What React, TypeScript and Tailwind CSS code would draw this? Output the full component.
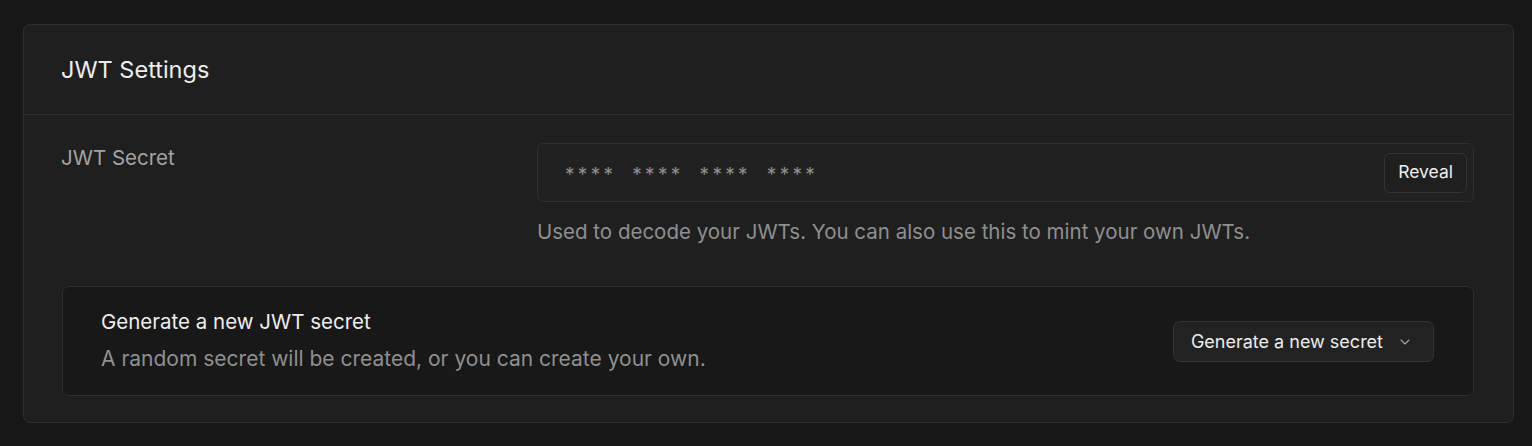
import { ChevronDown } from "lucide-react";

export default function App() {
  return (
    <div
      className="min-h-[446px] bg-[#171717] pl-[23px] pr-[18px] pt-[24px] pb-[22px]"
      style={{ fontFamily: "Inter, 'Noto Sans', sans-serif" }}
    >
      <div className="rounded-[7px] border border-[#2e2e2e] bg-[#1f1f1f]">
        <div className="flex h-[90px] items-center border-b border-[#2e2e2e] px-[37px]">
          <h2 className="text-[23.5px] font-normal text-[#ededed]">JWT Settings</h2>
        </div>

        <div className="pl-[37px] pr-[39px] pt-[28px] pb-[26px]">
          <div className="flex">
            <div className="w-[476px] shrink-0 pt-[1px] text-[20.5px] leading-[28px] text-[#a3a3a3]">JWT Secret</div>
            <div className="flex-1">
              <div className="flex h-[59px] items-center justify-between rounded-[6px] border border-[#2e2e2e] bg-[#212121] pl-[27px] pr-[6px]">
                <span className="flex gap-[16px] pt-[6px] text-[19px] tracking-[3.3px] text-[#8f8f8f]">
                  <span>****</span>
                  <span>****</span>
                  <span>****</span>
                  <span>****</span>
                </span>
                <button className="h-[40px] rounded-[6px] border border-[#343434] bg-[#1f1f1f] px-[13px] text-[17.5px] text-[#ededed]">
                  Reveal
                </button>
              </div>
              <p className="mt-[15px] text-[20.5px] text-[#8f8f8f]">
                Used to decode your JWTs. You can also use this to mint your own JWTs.
              </p>
            </div>
          </div>

          <div className="mt-[38px] ml-[1px] flex h-[110px] items-center justify-between rounded-[7px] border border-[#2e2e2e] bg-[#181818] pl-[38px] pr-[39px]">
            <div>
              <div className="text-[20.5px] leading-[28px] text-[#ededed]">Generate a new JWT secret</div>
              <div className="mt-[9px] text-[21px] leading-[28px] text-[#8f8f8f]">
                A random secret will be created, or you can create your own.
              </div>
            </div>
            <button className="mt-[2px] flex h-[41px] items-center gap-[14px] rounded-[7px] border border-[#343434] bg-[#222222] pl-[17px] pr-[20px] text-[18px] text-[#ededed]">
              Generate a new secret
              <ChevronDown size={16} strokeWidth={1.75} className="text-[#a3a3a3]" />
            </button>
          </div>
        </div>
      </div>
    </div>
  );
}
